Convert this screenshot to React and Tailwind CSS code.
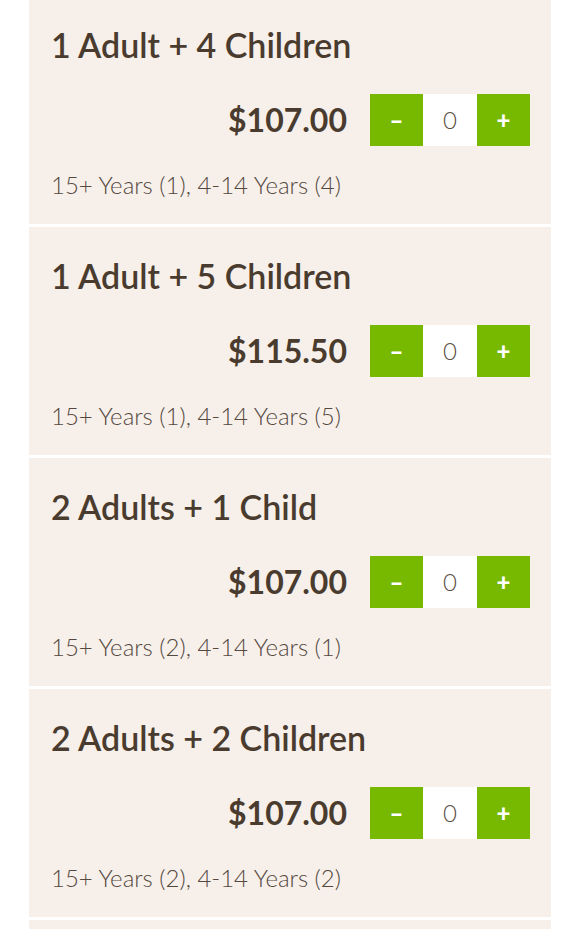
import React from "react";

const items = [
  { title: "1 Adult + 4 Children", price: "$107.00", sub: "15+ Years (1), 4-14 Years (4)" },
  { title: "1 Adult + 5 Children", price: "$115.50", sub: "15+ Years (1), 4-14 Years (5)" },
  { title: "2 Adults + 1 Child", price: "$107.00", sub: "15+ Years (2), 4-14 Years (1)" },
  { title: "2 Adults + 2 Children", price: "$107.00", sub: "15+ Years (2), 4-14 Years (2)" },
];

function Card({ item }) {
  return (
    <div className="bg-[#f7f0ea] pl-[22px] pr-[21px] pt-[31px] pb-[25px]">
      <div className="h-[36px] text-[34px] leading-[36px] font-semibold text-[#4a3b2f]">{item.title}</div>
      <div className="mt-[31px] flex items-center justify-end">
        <div className="mr-[23px] text-[32px] leading-[40px] font-bold text-[#4a3b2f]">{item.price}</div>
        <div className="flex h-[52px]">
          <button className="flex h-[52px] w-[53px] items-center justify-center bg-[#77b800] text-[24px] font-black text-white">–</button>
          <div className="flex h-[52px] w-[54px] items-center justify-center bg-white text-[24px] font-light text-[#5a4e44]">0</div>
          <button className="flex h-[52px] w-[53px] items-center justify-center bg-[#77b800] text-[24px] font-black text-white">+</button>
        </div>
      </div>
      <div className="mt-[25px] h-[28px] text-[24px] leading-[28px] font-light text-[#54483f]">{item.sub}</div>
    </div>
  );
}

export default function App() {
  return (
    <div className="h-screen overflow-hidden bg-white" style={{ fontFamily: "Lato, 'Noto Sans', sans-serif" }}>
      <div className="mx-[29px] mt-[-4px] flex flex-col gap-[3px]">
        {items.map((it, i) => (
          <Card key={i} item={it} />
        ))}
        <div className="h-[40px] bg-[#f7f0ea]" />
      </div>
    </div>
  );
}
